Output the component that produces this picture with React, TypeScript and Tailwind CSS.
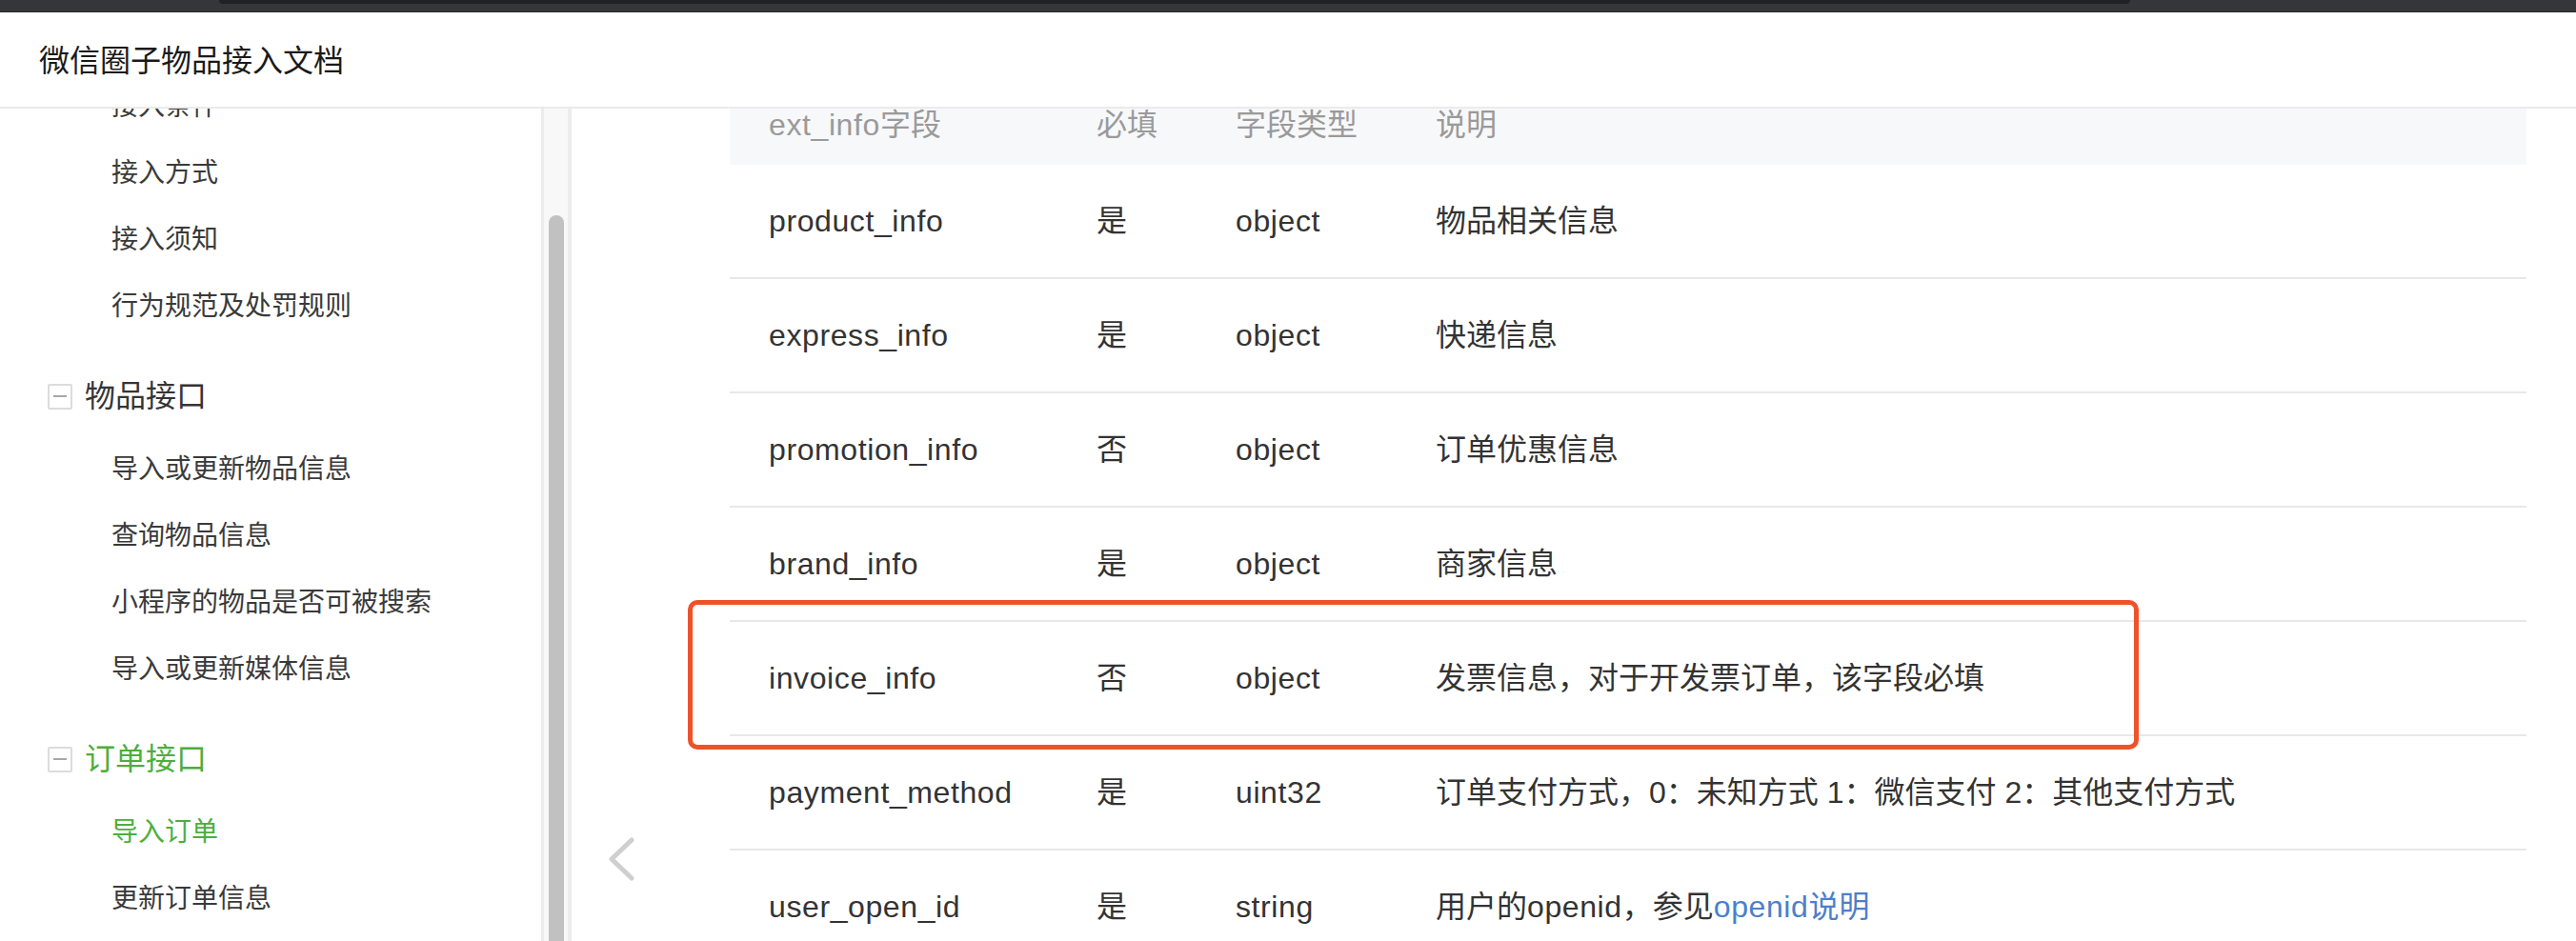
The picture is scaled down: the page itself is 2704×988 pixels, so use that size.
const FONT = "font-['Liberation_Sans','Noto_Sans_CJK_SC',sans-serif]";

type Row = {
  field: string;
  required: string;
  type: string;
  desc: React.ReactNode;
};

const ROWS: Row[] = [
  { field: "product_info", required: "是", type: "object", desc: "物品相关信息" },
  { field: "express_info", required: "是", type: "object", desc: "快递信息" },
  { field: "promotion_info", required: "否", type: "object", desc: "订单优惠信息" },
  { field: "brand_info", required: "是", type: "object", desc: "商家信息" },
  {
    field: "invoice_info",
    required: "否",
    type: "object",
    desc: "发票信息，对于开发票订单，该字段必填",
  },
  {
    field: "payment_method",
    required: "是",
    type: "uint32",
    desc: "订单支付方式，0：未知方式 1：微信支付 2：其他支付方式",
  },
  {
    field: "user_open_id",
    required: "是",
    type: "string",
    desc: (
      <>
        用户的<span className="tracking-[0.6px]">openid</span>，参见
        <span className="text-[#4b7fcc]">
          <span className="tracking-[0.6px]">openid</span>说明
        </span>
      </>
    ),
  },
];

type NavGroup = {
  title?: string;
  active?: boolean;
  items: { label: string; active?: boolean }[];
};

const NAV: NavGroup[] = [
  {
    items: [
      { label: "接入条件" },
      { label: "接入方式" },
      { label: "接入须知" },
      { label: "行为规范及处罚规则" },
    ],
  },
  {
    title: "物品接口",
    items: [
      { label: "导入或更新物品信息" },
      { label: "查询物品信息" },
      { label: "小程序的物品是否可被搜索" },
      { label: "导入或更新媒体信息" },
    ],
  },
  {
    title: "订单接口",
    active: true,
    items: [{ label: "导入订单", active: true }, { label: "更新订单信息" }, { label: "查询订单" }],
  },
];

function MinusBox() {
  return (
    <span className="flex items-center justify-center w-[26px] h-[27px] border-2 border-[#dcdcdc] rounded-[2px] bg-white">
      <span className="block w-[14px] h-[2px] bg-[#a8a8a8]" />
    </span>
  );
}

function Sidebar() {
  return (
    <div className="w-[568px] overflow-hidden">
      <div className="-mt-[37px]">
        {NAV.map((group, gi) => (
          <div key={gi}>
            {group.title && (
              <div className="mt-[17px] h-[84px] flex items-center pl-[50px] gap-[13px]">
                <MinusBox />
                <span
                  className={`text-[32px] ${group.active ? "text-[#4cae3d]" : "text-[#353535]"}`}
                >
                  {group.title}
                </span>
              </div>
            )}
            {group.items.map((item) => (
              <div
                key={item.label}
                className={`h-[70px] flex items-center pl-[117px] text-[28px] ${
                  item.active ? "text-[#4cae3d]" : "text-[#3a3a3a]"
                }`}
              >
                {item.label}
              </div>
            ))}
          </div>
        ))}
      </div>
    </div>
  );
}

function Scrollbar() {
  return (
    <div className="w-[32px] flex flex-col bg-[#f8f8f8] border-l-[3px] border-r-[4px] border-[#ececec]">
      <div className="mt-[112px] ml-[5px] w-[16px] flex-1 rounded-t-full bg-[#c1c1c1]" />
    </div>
  );
}

function DocTable() {
  return (
    <div className="pl-[166px] pr-[52px] -mt-[25px]">
      <div className="flex h-[84px] items-center bg-[#f7f8fa] text-[32px] text-[#9a9a9a]">
        <div className="w-[345px] pl-[41px]">
          <span className="tracking-[0.6px]">ext_info</span>字段
        </div>
        <div className="w-[146px] pl-[40px]">必填</div>
        <div className="w-[210px] pl-[40px]">字段类型</div>
        <div className="flex-1 pl-[40px]">说明</div>
      </div>
      {ROWS.map((r) => (
        <div
          key={r.field}
          className="flex h-[120px] items-center border-b-2 border-[#e8e8e8] text-[32px] text-[#333333]"
        >
          <div className="w-[345px] pl-[41px] tracking-[0.6px]">{r.field}</div>
          <div className="w-[146px] pl-[40px]">{r.required}</div>
          <div className="w-[210px] pl-[40px] tracking-[0.6px]">{r.type}</div>
          <div className="flex-1 pl-[40px]">{r.desc}</div>
        </div>
      ))}
    </div>
  );
}

export default function App() {
  return (
    <div className={`w-[2704px] h-[988px] overflow-hidden bg-white flex flex-col ${FONT}`}>
      {/* browser chrome strip */}
      <div className="h-[13px] flex pl-[230px] pr-[468px] bg-[#35363a] border-b border-[#27282b]">
        <div className="flex-1 h-[4px] bg-[#202124] rounded-b-[8px]" />
      </div>

      <header className="h-[101px] flex items-center pl-[41px] pt-[2px] border-b-2 border-[#ebebeb]">
        <h1 className="text-[32px] text-[#1a1a1a]">微信圈子物品接入文档</h1>
      </header>

      <div className="flex flex-1 min-h-0">
        <Sidebar />
        <Scrollbar />
        <main className="relative flex-1 overflow-hidden">
          <DocTable />

          {/* prev page arrow */}
          <button className="absolute left-[36px] top-[764px] w-[32px] h-[48px] flex items-center justify-center">
            <svg width="30" height="46" viewBox="0 0 30 46" fill="none">
              <polyline
                points="26,3 5,23 26,43"
                stroke="#cfcfcf"
                strokeWidth="5"
                strokeLinecap="round"
                strokeLinejoin="round"
              />
            </svg>
          </button>

          {/* highlight annotation */}
          <div className="absolute left-[122px] top-[516px] w-[1523px] h-[157px] border-[5px] border-[#ee5229] rounded-[10px] pointer-events-none" />
        </main>
      </div>
    </div>
  );
}
